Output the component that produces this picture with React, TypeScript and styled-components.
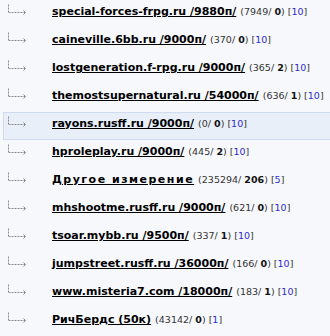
import React from "react";
import styled, { createGlobalStyle } from "styled-components";

const Global = createGlobalStyle`
  html, body {
    margin: 0;
    padding: 0;
    background: #f7f8fc;
    overflow: hidden;
  }
  body {
    font-family: "DejaVu Sans", Verdana, sans-serif;
  }
`;

const List = styled.ul`
  list-style: none;
  margin: 0;
  padding: 0;
  overflow: hidden;
`;

const Row = styled.li<{ $active?: boolean }>`
  display: flex;
  align-items: flex-start;
  box-sizing: border-box;
  height: 28px;
  margin-left: 3px;
  padding-top: 4px;
  border: 1px solid ${(p) => (p.$active ? "#cfdcf0" : "transparent")};
  border-right: 0;
  background: ${(p) => (p.$active ? "#e9eff9" : "transparent")};
  white-space: nowrap;
  line-height: 14px;
  overflow: hidden;
`;

const Branch = styled.svg`
  flex: none;
  margin-left: 3px;
  margin-top: -1px;
  margin-right: 24px;
`;

const Title = styled.a<{ $spacing?: number }>`
  font-size: 11px;
  font-weight: bold;
  color: #000;
  text-decoration: underline;
  letter-spacing: ${(p) => p.$spacing ?? 0}px;
`;

const Stats = styled.span`
  font-size: 9.5px;
  color: #333;
  margin-left: 4px;
`;

const Strong = styled.b`
  color: #111;
`;

const Count = styled.a`
  color: #2b2bd0;
  text-decoration: none;
`;

type Item = {
  title: string;
  posts: string;
  today: string;
  n: string;
  active?: boolean;
  spacing?: number;
};

const items: Item[] = [
  { title: "special-forces-frpg.ru /9880п/", posts: "7949", today: "0", n: "10" },
  { title: "caineville.6bb.ru /9000п/", posts: "370", today: "0", n: "10" },
  { title: "lostgeneration.f-rpg.ru /9000п/", posts: "365", today: "2", n: "10" },
  { title: "themostsupernatural.ru /54000п/", posts: "636", today: "1", n: "10" },
  { title: "rayons.rusff.ru /9000п/", posts: "0", today: "0", n: "10", active: true },
  { title: "hproleplay.ru /9000п/", posts: "445", today: "2", n: "10" },
  { title: "Другое измерение", posts: "235294", today: "206", n: "5", spacing: 1.5 },
  { title: "mhshootme.rusff.ru /9000п/", posts: "621", today: "0", n: "10" },
  { title: "tsoar.mybb.ru /9500п/", posts: "337", today: "1", n: "10" },
  { title: "jumpstreet.rusff.ru /36000п/", posts: "166", today: "0", n: "10" },
  { title: "www.misteria7.com /18000п/", posts: "183", today: "1", n: "10" },
  { title: "РичБердс (50к)", posts: "43142", today: "0", n: "1" },
];

const BranchIcon = () => (
  <Branch width="21" height="11" viewBox="0 0 21 11">
    <g stroke="#8a8a8a" strokeWidth="1" fill="none">
      <path d="M1.5 0.5 V8" strokeDasharray="2 1" />
      <path d="M1.5 8.5 H18" strokeDasharray="2 1" />
      <path d="M16.5 6.5 L18.5 8.5 L16.5 10.5" />
    </g>
  </Branch>
);

export default function App() {
  return (
    <>
      <Global />
      <List>
        {items.map((it) => (
          <Row key={it.title} $active={it.active}>
            <BranchIcon />
            <Title href="#" $spacing={it.spacing}>
              {it.title}
            </Title>
            <Stats>
              ({it.posts}/ <Strong>{it.today}</Strong>) [<Count href="#">{it.n}</Count>]
            </Stats>
          </Row>
        ))}
      </List>
    </>
  );
}
